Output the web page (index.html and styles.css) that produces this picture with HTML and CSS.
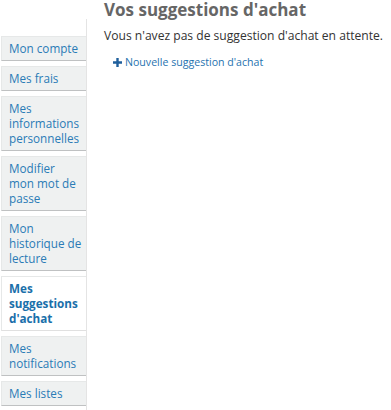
FILE: index.html
```html
<!DOCTYPE html>
<html lang="fr">
<head>
    <meta charset="UTF-8">
    <meta name="viewport" content="width=device-width, initial-scale=1.0">
    <title>Vos suggestions d'achat</title>
    <link rel="stylesheet" href="styles.css">
</head>
<body>
    <div class="page">
        <div class="sidebar">
            <ul class="menu">
                <li><a href="#">Mon compte</a></li>
                <li><a href="#">Mes frais</a></li>
                <li><a href="#">Mes informations personnelles</a></li>
                <li><a href="#">Modifier mon mot de passe</a></li>
                <li><a href="#">Mon historique de lecture</a></li>
                <li class="active"><a href="#">Mes suggestions d'achat</a></li>
                <li><a href="#">Mes notifications</a></li>
                <li><a href="#">Mes listes</a></li>
            </ul>
        </div>
        <div class="main">
            <h1>Vos suggestions d'achat</h1>
            <p>Vous n'avez pas de suggestion d'achat en attente.</p>
            <a class="new-link" href="#">
                <svg class="plus" width="9" height="9" viewBox="0 0 9 9"><path d="M3.3 0h2.4v3.3H9v2.4H5.7V9H3.3V5.7H0V3.3h3.3z"/></svg>
                Nouvelle suggestion d'achat
            </a>
        </div>
    </div>
</body>
</html>
```

FILE: styles.css
```css
body {
    font-family: "Open Sans", "Liberation Sans", sans-serif;
    margin: 0;
    background-color: #fff;
    color: #333;
}
.page {
    display: flex;
    align-items: flex-start;
}
.sidebar {
    width: 86px;
    margin-top: 19px;
    padding-top: 17px;
    border-right: 1px solid #e4e4e4;
    height: 391px;
}
.menu {
    list-style: none;
    margin: 0;
    padding: 0 0 0 1px;
    display: flex;
    flex-direction: column;
    gap: 5px;
}
.menu a {
    display: block;
    background-color: #eff1f1;
    border: 1px solid #e6e8e8;
    border-right: none;
    border-bottom: 1px solid #bfc1c2;
    padding: 4px 4px 4px 7px;
    font-size: 11.7px;
    line-height: 15px;
    color: #2a7bb6;
    text-decoration: none;
}
.menu .active a {
    background-color: #fff;
    border-bottom-color: #e0e0e0;
    font-weight: bold;
    color: #1a6faa;
}
.main {
    padding-left: 17px;
}
h1 {
    font-size: 17px;
    font-weight: bold;
    color: #666;
    margin: 0;
    line-height: 20px;
}
p {
    font-size: 12.1px;
    margin: 8px 0 0 0;
    line-height: 16px;
}
.new-link {
    display: inline-flex;
    align-items: center;
    gap: 3px;
    margin: 11px 0 0 9px;
    font-size: 10.6px;
    color: #1f73b0;
    text-decoration: none;
}
.plus {
    fill: #1f5f9c;
}
```
